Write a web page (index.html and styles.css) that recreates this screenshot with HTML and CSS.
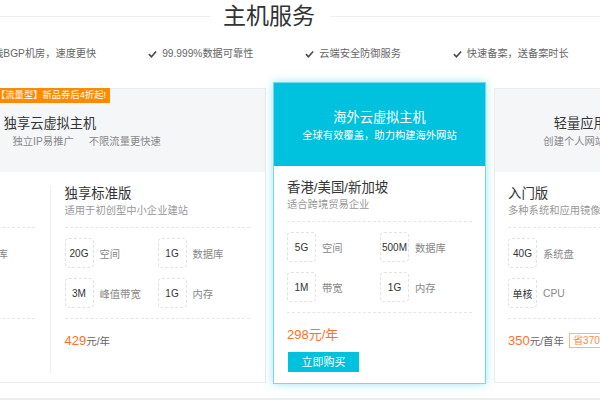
FILE: index.html
```html
<!DOCTYPE html>
<html lang="zh-CN">
<head>
<meta charset="utf-8">
<title>主机服务</title>
<link rel="stylesheet" href="styles.css">
</head>
<body>
<section class="hosting">
  <header class="section-head">
    <span class="rule rule-left"></span>
    <h2 class="section-title">主机服务</h2>
    <span class="rule rule-right"></span>
  </header>

  <ul class="features">
    <li class="feature"><svg class="check" viewBox="0 0 10 8"><path d="M1 4.2 3.8 7 9 1.2"/></svg>多线BGP机房，速度更快</li>
    <li class="feature"><svg class="check" viewBox="0 0 10 8"><path d="M1 4.2 3.8 7 9 1.2"/></svg>99.999%数据可靠性</li>
    <li class="feature"><svg class="check" viewBox="0 0 10 8"><path d="M1 4.2 3.8 7 9 1.2"/></svg>云端安全防御服务</li>
    <li class="feature"><svg class="check" viewBox="0 0 10 8"><path d="M1 4.2 3.8 7 9 1.2"/></svg>快速备案，送备案时长</li>
  </ul>

  <div class="cards">
    <article class="card card-side card-wide">
      <span class="tag">【流量型】新品券后4折起!</span>
      <div class="card-head">
        <h3 class="head-title">独享云虚拟主机</h3>
        <p class="head-sub"><span>独享1核CPU</span><span>独立IP易推广</span><span>不限流量更快速</span></p>
      </div>
      <div class="card-body split">
        <div class="plan plan-col plan-divided">
          <h4 class="plan-title">独享基础版</h4>
          <p class="plan-desc">适用于个人及小型企业网站</p>
          <div class="specs">
            <div class="spec"><span class="spec-val">10G</span><span class="spec-name">空间</span></div>
            <div class="spec"><span class="spec-val">500M</span><span class="spec-name">数据库</span></div>
            <div class="spec"><span class="spec-val">2M</span><span class="spec-name">峰值带宽</span></div>
            <div class="spec"><span class="spec-val">1G</span><span class="spec-name">内存</span></div>
          </div>
          <p class="price"><span class="price-num">299</span>元/年</p>
        </div>
        <div class="plan plan-col">
          <h4 class="plan-title">独享标准版</h4>
          <p class="plan-desc">适用于初创型中小企业建站</p>
          <div class="specs">
            <div class="spec"><span class="spec-val">20G</span><span class="spec-name">空间</span></div>
            <div class="spec"><span class="spec-val">1G</span><span class="spec-name">数据库</span></div>
            <div class="spec"><span class="spec-val">3M</span><span class="spec-name">峰值带宽</span></div>
            <div class="spec"><span class="spec-val">1G</span><span class="spec-name">内存</span></div>
          </div>
          <p class="price"><span class="price-num">429</span>元/年</p>
        </div>
      </div>
    </article>

    <article class="card card-main">
      <div class="card-head">
        <h3 class="head-title">海外云虚拟主机</h3>
        <p class="head-sub"><span>全球有效覆盖，助力构建海外网站</span></p>
      </div>
      <div class="card-body">
        <div class="plan">
          <h4 class="plan-title">香港/美国/新加坡</h4>
          <p class="plan-desc">适合跨境贸易企业</p>
          <div class="specs">
            <div class="spec"><span class="spec-val">5G</span><span class="spec-name">空间</span></div>
            <div class="spec"><span class="spec-val">500M</span><span class="spec-name">数据库</span></div>
            <div class="spec"><span class="spec-val">1M</span><span class="spec-name">带宽</span></div>
            <div class="spec"><span class="spec-val">1G</span><span class="spec-name">内存</span></div>
          </div>
          <p class="price price-main">298元/年</p>
          <button class="buy" type="button">立即购买</button>
        </div>
      </div>
    </article>

    <article class="card card-side card-right">
      <div class="card-head">
        <h3 class="head-title">轻量应用服务器</h3>
        <p class="head-sub"><span>创建个人网站、博客首选</span></p>
      </div>
      <div class="card-body">
        <div class="plan">
          <h4 class="plan-title">入门版</h4>
          <p class="plan-desc">多种系统和应用镜像一键部署</p>
          <div class="specs">
            <div class="spec"><span class="spec-val">40G</span><span class="spec-name">系统盘</span></div>
            <div class="spec"><span class="spec-val">3M</span><span class="spec-name">峰值带宽</span></div>
            <div class="spec"><span class="spec-val">单核</span><span class="spec-name">CPU</span></div>
            <div class="spec"><span class="spec-val">1G</span><span class="spec-name">内存</span></div>
          </div>
          <p class="price"><span class="price-num">350</span>元/首年<span class="save">省370元</span></p>
        </div>
      </div>
    </article>
  </div>
</section>
</body>
</html>
```

FILE: styles.css
```css
* {
  box-sizing: border-box;
  margin: 0;
  padding: 0;
}

body {
  width: 600px;
  height: 400px;
  overflow: hidden;
  background: #fff;
  color: #333;
  font-family: "Liberation Sans", "Noto Sans CJK SC", sans-serif;
}

.hosting {
  height: 400px;
  border-bottom: 2px solid #ededed;
  overflow: hidden;
}

/* section title */
.section-head {
  display: flex;
  align-items: center;
  height: 32px;
}

.rule {
  height: 1px;
  background: #eee;
}

.rule-left {
  width: 210px;
  flex: none;
}

.rule-right {
  flex: 1;
}

.section-title {
  margin: 0 15px 0 13px;
  font-size: 23px;
  font-weight: 400;
  line-height: 32px;
  color: #333;
  white-space: nowrap;
}

/* feature list */
.features {
  list-style: none;
  display: flex;
  align-items: center;
  gap: 52px;
  height: 14px;
  margin: 15px 0 0 -31px;
  white-space: nowrap;
}

.feature {
  flex: none;
  display: flex;
  align-items: center;
  font-size: 10.2px;
  line-height: 14px;
  color: #666;
}

.check {
  width: 9px;
  height: 8px;
  margin-right: 5px;
  fill: none;
  stroke: #4a4a4a;
  stroke-width: 1.8;
}

/* cards */
.cards {
  display: flex;
  align-items: flex-start;
  margin: 21px 0 0 -166px;
}

.card {
  position: relative;
  flex: none;
  border: 1px solid #ececec;
  background: #fff;
}

.card-side {
  margin-top: 6px;
  height: 295px;
}

.card-wide {
  width: 432px;
}

.card-main {
  width: 213px;
  height: 302px;
  margin-left: 7px;
  border-color: #76d9ea;
  box-shadow: 0 0 9px rgba(0, 193, 222, 0.38);
}

.card-right {
  width: 212px;
  margin-left: 8px;
}

.tag {
  position: absolute;
  top: -1px;
  left: 157px;
  height: 15px;
  padding: 0 4px;
  background: #ff8a00;
  color: #fff;
  font-size: 9.3px;
  line-height: 15px;
  white-space: nowrap;
}

.card-head {
  height: 83px;
  padding-top: 26px;
  background: #f5f6f8;
  text-align: center;
}

.card-main .card-head {
  background: #00c1de;
}

.head-title {
  font-size: 13.2px;
  font-weight: 400;
  line-height: 18px;
  color: #333;
  white-space: nowrap;
}

.head-sub {
  display: flex;
  justify-content: center;
  gap: 15px;
  margin-top: 2px;
  font-size: 10.3px;
  line-height: 14px;
  color: #888;
  white-space: nowrap;
}

.card-main .head-title,
.card-main .head-sub {
  color: #fff;
}

/* plans */
.split {
  display: flex;
}

.plan {
  padding: 13px 13px 0;
}

.plan-col {
  flex: 1;
  height: 188px;
  margin-top: 13px;
  padding: 0 15px 0 14px;
}

.plan-divided {
  border-right: 1px solid #eee;
}

.plan-title {
  font-size: 13.4px;
  font-weight: 400;
  line-height: 18px;
  color: #333;
  white-space: nowrap;
}

.plan-desc {
  margin-top: 1px;
  font-size: 10.3px;
  line-height: 14px;
  color: #999;
  white-space: nowrap;
}

.specs {
  display: grid;
  grid-template-columns: 93px 1fr;
  row-gap: 10px;
  margin-top: 9px;
  padding: 10px 0;
  border-top: 1px dashed #e6e6e6;
  border-bottom: 1px dashed #e6e6e6;
}

.spec {
  display: flex;
  align-items: center;
  gap: 6px;
  white-space: nowrap;
}

.spec-val {
  display: flex;
  align-items: center;
  justify-content: center;
  flex: none;
  width: 29px;
  height: 30px;
  border: 1px dashed #e2e2e2;
  border-radius: 4px;
  font-size: 10px;
  color: #333;
}

.spec-name {
  font-size: 10.3px;
  color: #888;
}

.price {
  margin-top: 14px;
  font-size: 10.5px;
  line-height: 16px;
  color: #666;
  white-space: nowrap;
}

.price-num {
  font-size: 13px;
  color: #ff7028;
}

.price-main {
  font-size: 13px;
  color: #ff7028;
}

.save {
  display: inline-block;
  margin-left: 5px;
  padding: 0 3px;
  border: 1px solid #ffb574;
  font-size: 10px;
  line-height: 13px;
  color: #ff8a3d;
  vertical-align: 1px;
}

.buy {
  display: block;
  width: 71px;
  height: 20px;
  margin-top: 9px;
  margin-left: 1px;
  border: 0;
  background: #00c1de;
  color: #fff;
  font-family: inherit;
  font-size: 11px;
  line-height: 20px;
  cursor: pointer;
}
```
